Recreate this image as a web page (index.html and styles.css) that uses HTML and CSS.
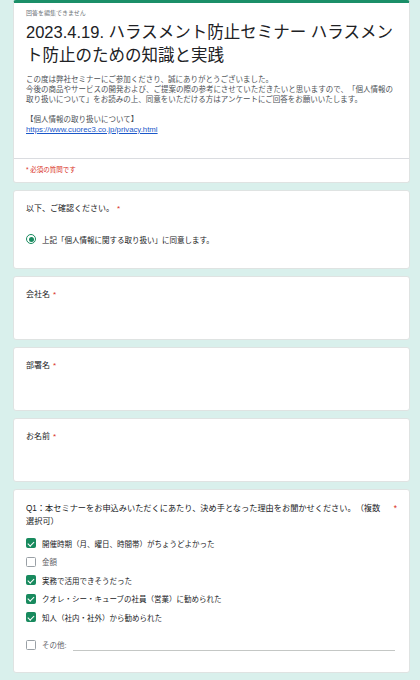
FILE: index.html
```html
<!DOCTYPE html>
<html lang="ja">
<head>
    <meta charset="UTF-8">
    <meta name="viewport" content="width=device-width, initial-scale=1.0">
    <title>2023.4.19. ハラスメント防止セミナー</title>
    <link rel="stylesheet" href="styles.css">
</head>
<body>
    <div class="page">
        <div class="card head">
            <div class="head-main">
                <div class="note">回答を編集できません</div>
                <h1 class="title">2023.4.19. ハラスメント防止セミナー ハラスメント防止のための知識と実践</h1>
                <div class="desc">
                    この度は弊社セミナーにご参加くださり、誠にありがとうございました。<br>
                    今後の商品やサービスの開発および、ご提案の際の参考にさせていただきたいと思いますので、「個人情報の取り扱いについて」をお読みの上、同意をいただける方はアンケートにご回答をお願いいたします。<br>
                    <br>
                    【個人情報の取り扱いについて】<br>
                    <a href="#">https://www.cuorec3.co.jp/privacy.html</a>
                </div>
            </div>
            <div class="required">* 必須の質問です</div>
        </div>

        <div class="card q-agree">
            <div class="label">以下、ご確認ください。<span class="star">*</span></div>
            <div class="choice radio-row">
                <span class="radio"></span>
                <span>上記「個人情報に関する取り扱い」に同意します。</span>
            </div>
        </div>

        <div class="card q-text">
            <div class="label">会社名<span class="star">*</span></div>
            <div class="answer"></div>
        </div>

        <div class="card q-text">
            <div class="label">部署名<span class="star">*</span></div>
            <div class="answer"></div>
        </div>

        <div class="card q-text">
            <div class="label">お名前<span class="star">*</span></div>
            <div class="answer"></div>
        </div>

        <div class="card q-check">
            <div class="q-title">
                <div class="q-text-body">Q1：本セミナーをお申込みいただくにあたり、決め手となった理由をお聞かせください。（複数選択可）</div>
                <span class="star">*</span>
            </div>
            <div class="options">
                <div class="choice"><span class="box checked"></span><span>開催時期（月、曜日、時間帯）がちょうどよかった</span></div>
                <div class="choice"><span class="box"></span><span class="muted">金額</span></div>
                <div class="choice"><span class="box checked"></span><span>実務で活用できそうだった</span></div>
                <div class="choice"><span class="box checked"></span><span>クオレ・シー・キューブの社員（営業）に勧められた</span></div>
                <div class="choice"><span class="box checked"></span><span>知人（社内・社外）から勧められた</span></div>
                <div class="choice other">
                    <span class="box"></span><span class="muted">その他:</span>
                    <span class="other-line"></span>
                </div>
            </div>
        </div>
    </div>
</body>
</html>
```

FILE: styles.css
```css
body {
    margin: 0;
    background-color: #d9f0ec;
    font-family: "Liberation Sans", "Noto Sans CJK JP", sans-serif;
    color: #202124;
    text-spacing-trim: space-all;
}
.page {
    width: 397px;
    margin-left: 13px;
    display: flex;
    flex-direction: column;
    gap: 7px;
    padding-bottom: 8px;
}
.card {
    background-color: white;
    border: 1px solid #dfe3e2;
    border-radius: 3px;
    padding: 12px 12px 0;
}
.head {
    padding: 0;
    border-top: 3px solid #1b8f68;
}
.head-main {
    padding: 6px 12px 23px;
    border-bottom: 1px solid #dadce0;
}
.note {
    font-size: 6px;
    line-height: 8px;
    color: #70757a;
}
.title {
    margin: 4px 0 0;
    font-size: 16.5px;
    line-height: 23px;
    font-weight: normal;
    color: #202124;
}
.desc {
    margin-top: 8px;
    font-size: 7.5px;
    line-height: 10px;
    color: #4d5156;
}
.desc a {
    color: #1a57c9;
    font-size: 7.8px;
}
.required {
    padding: 6px 12px 7px;
    font-size: 6.5px;
    line-height: 10px;
    color: #d93025;
}
.label {
    font-size: 8px;
    line-height: 12px;
}
.star {
    color: #d93025;
    margin-left: 3px;
}
.q-agree {
    height: 65px;
}
.radio-row {
    margin-top: 18px;
}
.choice {
    display: flex;
    align-items: center;
    gap: 6px;
    font-size: 7.5px;
    height: 12px;
}
.radio {
    width: 10px;
    height: 10px;
    box-sizing: border-box;
    border: 1.5px solid #188a5e;
    border-radius: 50%;
    display: flex;
    align-items: center;
    justify-content: center;
    flex-shrink: 0;
}
.radio::after {
    content: "";
    width: 5px;
    height: 5px;
    border-radius: 50%;
    background-color: #188a5e;
}
.q-text {
    height: 50px;
}
.q-check {
    height: 170px;
}
.q-title {
    display: flex;
    gap: 6px;
    font-size: 8.2px;
    line-height: 13px;
}
.q-text-body {
    flex: 1;
}
.q-title .star {
    margin-left: 0;
}
.options {
    margin-top: 6px;
    display: flex;
    flex-direction: column;
}
.options .choice {
    height: 18.5px;
}
.box {
    width: 10px;
    height: 10px;
    box-sizing: border-box;
    border: 1.5px solid #9aa0a6;
    border-radius: 1.5px;
    flex-shrink: 0;
    position: relative;
}
.box.checked {
    background-color: #188a5e;
    border-color: #188a5e;
}
.box.checked::after {
    content: "";
    position: absolute;
    left: 2.2px;
    top: 0.3px;
    width: 2.5px;
    height: 5px;
    border-right: 1.3px solid white;
    border-bottom: 1.3px solid white;
    transform: rotate(45deg);
}
.muted {
    color: #5f6368;
}
.options .other {
    margin-top: 7px;
    height: 22px;
}
.other-line {
    flex: 1;
    align-self: flex-end;
    margin: 0 2px 5px 0;
    border-bottom: 1px solid #c4c7c5;
}
```
